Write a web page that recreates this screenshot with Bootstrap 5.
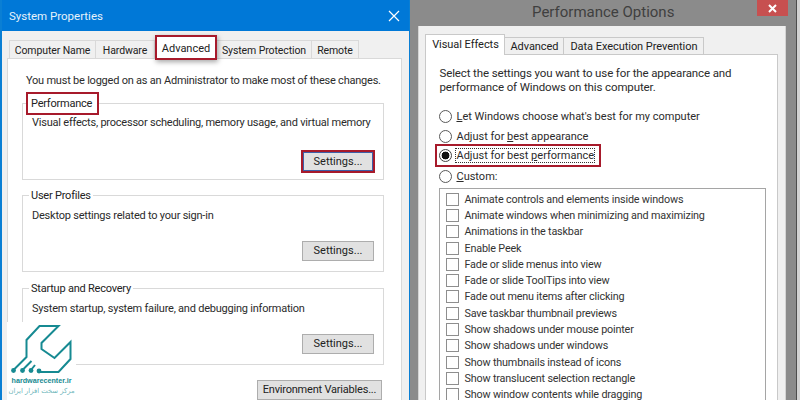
<!doctype html>
<html lang="en">
<head>
<meta charset="utf-8">
<title>System Properties / Performance Options</title>
<link rel="stylesheet" href="https://cdn.jsdelivr.net/npm/bootstrap@5.3.0/dist/css/bootstrap.min.css">
<style>
html,body{height:400px;overflow:hidden}
body{background:#8b8b8b;font-family:Roboto,"Noto Sans",sans-serif;font-size:11px;line-height:16px;color:#2b2b2b}
.stage{width:800px;height:400px;overflow:hidden}
.win-a{width:412px;height:400px;border:solid #0a7fd4;border-width:0 1px 0 2px;background:#f0f0f0;position:relative;overflow:hidden}
.title-a{height:31px;margin:0 -1px 0 -2px;padding:0 10px 0 9px;background:#0078d7;color:#e6f2fb;font-size:11.5px}
.tabs-a{padding:9px 0 0 7px;height:27px;border:0;--bs-nav-tabs-border-width:0;align-items:flex-end;flex-wrap:nowrap}
.tab-x{display:block;height:18px;line-height:19px;text-align:center;border:1px solid #d9d9d9;border-bottom:0;border-left-width:0;background:#f0f0f0;color:#222;white-space:nowrap;font-size:10.5px;letter-spacing:-.1px}
.tabs-a li:first-child .tab-x{border-left-width:1px}
.tw-1{width:87px}.tw-2{width:59px}.tw-3{width:62px}.tw-4{width:95px}.tw-5{width:47px}
.tab-on{height:25px;margin-bottom:-2px;line-height:24px;border:2px solid #a71a2b;background:#fff;box-shadow:1px 2px 5px rgba(0,0,0,.35);position:relative;z-index:2;font-size:11px;letter-spacing:0}
.pane-a{margin-left:5px;width:395px;height:342px;background:#fff;border:1px solid #d9d9d9;border-bottom:0;padding:14px 0 0 18px;letter-spacing:-.22px}
.pane-a p,.pane-b p{margin:0;white-space:nowrap}
.group-x{width:362px;margin:0 0 0 -4px;padding:0 9px 0 6px;border:1px solid #d9d9d9;height:85px;min-width:0}
.group-1{height:88px;margin-top:3px}
.group-2{margin-top:7px}
.group-3{margin-top:8px}
.group-x legend{float:none;width:auto;margin:0;padding:1px 2px 0;font-size:11px;line-height:16px;color:#222}
.group-1 legend{width:73px;padding:2px 0 1px 3px;margin-left:-3px;border:2px solid #a71a2b;background:#fff}
.group-x .desc{margin:4px 0 0 3px;line-height:16px}
.group-1 .desc{margin-top:0}
.btn-win{--bs-btn-padding-y:0;--bs-btn-padding-x:0;--bs-btn-font-size:11px;--bs-btn-line-height:18px;--bs-btn-border-radius:0;--bs-btn-color:#222;--bs-btn-bg:#e1e1e1;--bs-btn-border-color:#adadad;width:72px;height:20px;letter-spacing:0}
.row-btn{margin-top:17px}
.row-btn-1{margin-top:21px}
.btn-focus{--bs-btn-border-color:#3d5fa8;outline:2px solid #a71a2b;width:70px;height:19px;margin-right:1px}
.btn-env{width:125px;margin:15px 19px 0 0;height:20px;letter-spacing:-.2px}
.logo-x{position:absolute;left:5px;top:322px;width:69px;height:78px;background:#fff;text-align:center;z-index:3;letter-spacing:0}
.logo-x svg{display:block}
.logo-name{display:block;font-size:7.2px;line-height:10px;font-weight:700;color:#178a91;font-family:"Liberation Sans",sans-serif}
.logo-sub{display:block;font-size:6.8px;line-height:10px;color:#6fb7bb;font-family:"DejaVu Sans",sans-serif;white-space:nowrap;text-align:center}
.win-b{width:388px;height:400px;background:#8b8b8b;border-right:1px solid #4d4d4d;position:relative;overflow:hidden}
.edge-b{width:3px;height:400px;background:#d2d2d2;flex:none}
.title-b{height:26px;padding-bottom:2px;color:#3f3f3f;font-size:15px;position:relative}
.close-b{position:absolute;right:8px;top:0;width:31px;height:16px;background:#c75050;color:#fff}
.body-b{margin-left:8px;width:368px;height:374px;background:#f0f0f0;padding:8px 0 0 6px;border:1px solid #d4d4d4;border-width:0 1px}
.tabs-b{height:20px;border:0;align-items:flex-end;flex-wrap:nowrap}
.tab-y{display:block;height:17px;line-height:18px;text-align:center;border:1px solid #c9c9c9;border-left-width:0;border-bottom:0;background:#f0f0f0;color:#222;white-space:nowrap;font-size:11px;letter-spacing:-.05px}
.ty-1{width:80px}.ty-2{width:59px}.ty-3{width:140px}
.tab-y-on{height:21px;margin-bottom:-1px;line-height:19px;border-left-width:1px;background:#fff;position:relative;z-index:2}
.pane-b{width:353px;height:346px;background:#fff;border:1px solid #c9c9c9;border-bottom:0;padding:11px 0 0 13px;line-height:14px;font-size:11.5px;letter-spacing:-.12px}
.choices{margin-top:12px;font-size:11px;letter-spacing:0}
.choice{height:20px;color:#2b2b2b}
.choice .form-check-input,.lst-row .form-check-input{margin:0;flex:none;width:13px;height:13px;background-image:none;float:none;--bs-form-check-bg:#fff;border:1px solid #5a5a5a;box-shadow:none}
.choice .form-check-input:checked{background-color:#fff;background-image:radial-gradient(circle,#111 0 3.6px,transparent 4.2px);border-color:#444}
.choice label{margin-left:4px;line-height:13px;white-space:nowrap}
.choice-on{height:23px;margin:-2px 0 -1px -4px;padding-left:2px;width:166px;border:2px solid #a71a2b}
.choice-on label{outline:1px dotted #333}
.lst-box{margin-top:2px;width:327px;height:212px;border:1px solid #a5a5a5;border-bottom:0;padding:2px 0 0 6px;background:#fff;color:#333;font-size:10.8px;letter-spacing:-.17px;overflow:hidden}
.lst-row{height:16.3px;line-height:13px}
.lst-row .form-check-input{border-radius:0;border-color:#8e8e8e}
.lst-row label{margin-left:5px;white-space:nowrap}
</style>
</head>
<body>
<div class="stage d-flex">
  <section class="win-a">
    <header class="title-a d-flex align-items-center justify-content-between">
      <span>System Properties</span>
      <svg width="12" height="12" viewBox="0 0 12 12" aria-hidden="true"><path d="M1 1l10 10M11 1L1 11" stroke="#fff" stroke-width="1.2"/></svg>
    </header>
    <ul class="nav nav-tabs tabs-a">
      <li class="nav-item"><span class="tab-x tw-1">Computer Name</span></li>
      <li class="nav-item"><span class="tab-x tw-2">Hardware</span></li>
      <li class="nav-item"><span class="tab-x tw-3 tab-on">Advanced</span></li>
      <li class="nav-item"><span class="tab-x tw-4">System Protection</span></li>
      <li class="nav-item"><span class="tab-x tw-5">Remote</span></li>
    </ul>
    <div class="pane-a">
      <p>You must be logged on as an Administrator to make most of these changes.</p>
      <fieldset class="group-x group-1">
        <legend>Performance</legend>
        <p class="desc">Visual effects, processor scheduling, memory usage, and virtual memory</p>
        <div class="d-flex justify-content-end row-btn-1"><button type="button" class="btn btn-win btn-focus">Settings...</button></div>
      </fieldset>
      <fieldset class="group-x group-2">
        <legend>User Profiles</legend>
        <p class="desc">Desktop settings related to your sign-in</p>
        <div class="d-flex justify-content-end row-btn"><button type="button" class="btn btn-win">Settings...</button></div>
      </fieldset>
      <fieldset class="group-x group-3">
        <legend>Startup and Recovery</legend>
        <p class="desc">System startup, system failure, and debugging information</p>
        <div class="d-flex justify-content-end row-btn"><button type="button" class="btn btn-win">Settings...</button></div>
      </fieldset>
      <div class="d-flex justify-content-end"><button type="button" class="btn btn-win btn-env">Environment Variables...</button></div>
    </div>
    <div class="logo-x">
      <svg width="69" height="54" viewBox="7 322 69 54" aria-hidden="true">
        <g fill="none" stroke="#168a92" stroke-width="2" stroke-linejoin="miter">
          <path d="M13.5 370l13-13v-17l13-14h19l-17 17v6l13 9 16-16v17l-12 13H39"/>
          <path d="M22.5 370l9-9M31 370l4-5"/>
        </g>
        <g fill="#168a92"><circle cx="13.5" cy="370.5" r="2.4"/><circle cx="22.5" cy="370.5" r="2.4"/><circle cx="31" cy="370.5" r="2.4"/><circle cx="39" cy="371" r="2.4"/></g>
      </svg>
      <span class="logo-name">hardwarecenter.ir</span>
      <span class="logo-sub" dir="rtl" lang="fa">مرکز سخت افزار ایران</span>
    </div>
  </section>
  <section class="win-b">
    <header class="title-b d-flex align-items-center justify-content-center">
      <span>Performance Options</span>
      <div class="close-b d-flex align-items-center justify-content-center">
        <svg width="9" height="9" viewBox="0 0 9 9" aria-hidden="true"><path d="M1 1l7 7M8 1L1 8" stroke="#fff" stroke-width="2"/></svg>
      </div>
    </header>
    <div class="body-b">
      <ul class="nav nav-tabs tabs-b">
        <li class="nav-item"><span class="tab-y ty-1 tab-y-on">Visual Effects</span></li>
        <li class="nav-item"><span class="tab-y ty-2">Advanced</span></li>
        <li class="nav-item"><span class="tab-y ty-3">Data Execution Prevention</span></li>
      </ul>
      <div class="pane-b">
        <p>Select the settings you want to use for the appearance and<br>performance of Windows on this computer.</p>
        <div class="choices">
          <div class="choice d-flex align-items-center"><input class="form-check-input" type="radio" name="vfx" id="r1"><label for="r1"><u>L</u>et Windows choose what's best for my computer</label></div>
          <div class="choice d-flex align-items-center"><input class="form-check-input" type="radio" name="vfx" id="r2"><label for="r2">Adjust for <u>b</u>est appearance</label></div>
          <div class="choice choice-on d-flex align-items-center"><input class="form-check-input" type="radio" name="vfx" id="r3" checked><label for="r3">Adjust for best <u>p</u>erformance</label></div>
          <div class="choice d-flex align-items-center"><input class="form-check-input" type="radio" name="vfx" id="r4"><label for="r4"><u>C</u>ustom:</label></div>
        </div>
        <div class="lst-box">
          <div class="lst-row d-flex align-items-center"><input class="form-check-input" type="checkbox" id="c1"><label for="c1">Animate controls and elements inside windows</label></div>
          <div class="lst-row d-flex align-items-center"><input class="form-check-input" type="checkbox" id="c2"><label for="c2">Animate windows when minimizing and maximizing</label></div>
          <div class="lst-row d-flex align-items-center"><input class="form-check-input" type="checkbox" id="c3"><label for="c3">Animations in the taskbar</label></div>
          <div class="lst-row d-flex align-items-center"><input class="form-check-input" type="checkbox" id="c4"><label for="c4">Enable Peek</label></div>
          <div class="lst-row d-flex align-items-center"><input class="form-check-input" type="checkbox" id="c5"><label for="c5">Fade or slide menus into view</label></div>
          <div class="lst-row d-flex align-items-center"><input class="form-check-input" type="checkbox" id="c6"><label for="c6">Fade or slide ToolTips into view</label></div>
          <div class="lst-row d-flex align-items-center"><input class="form-check-input" type="checkbox" id="c7"><label for="c7">Fade out menu items after clicking</label></div>
          <div class="lst-row d-flex align-items-center"><input class="form-check-input" type="checkbox" id="c8"><label for="c8">Save taskbar thumbnail previews</label></div>
          <div class="lst-row d-flex align-items-center"><input class="form-check-input" type="checkbox" id="c9"><label for="c9">Show shadows under mouse pointer</label></div>
          <div class="lst-row d-flex align-items-center"><input class="form-check-input" type="checkbox" id="c10"><label for="c10">Show shadows under windows</label></div>
          <div class="lst-row d-flex align-items-center"><input class="form-check-input" type="checkbox" id="c11"><label for="c11">Show thumbnails instead of icons</label></div>
          <div class="lst-row d-flex align-items-center"><input class="form-check-input" type="checkbox" id="c12"><label for="c12">Show translucent selection rectangle</label></div>
          <div class="lst-row d-flex align-items-center"><input class="form-check-input" type="checkbox" id="c13"><label for="c13">Show window contents while dragging</label></div>
        </div>
      </div>
    </div>
  </section>
  <div class="edge-b"></div>
</div>
<script src="https://cdn.jsdelivr.net/npm/bootstrap@5.3.0/dist/js/bootstrap.bundle.min.js"></script>
</body>
</html>
